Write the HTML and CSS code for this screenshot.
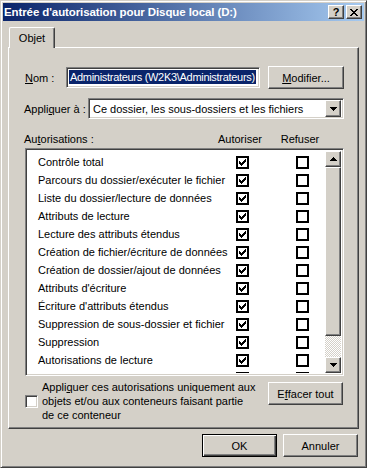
FILE: index.html
```html
<!DOCTYPE html>
<html lang="fr">
<head>
    <meta charset="UTF-8">
    <meta name="viewport" content="width=device-width, initial-scale=1.0">
    <title>Entrée d'autorisation pour Disque local (D:)</title>
    <link rel="stylesheet" href="styles.css">
</head>
<body>
    <div class="window">
        <div class="titlebar">
            <span class="title">Entrée d'autorisation pour Disque local (D:)</span>
            <div class="caption-buttons">
                <span class="raised caption-btn help">?</span>
                <span class="raised caption-btn">
                    <svg width="8" height="7" viewBox="0 0 8 7"><path d="M0 0h2v1H0zM6 0h2v1H6zM1 1h2v1H1zM5 1h2v1H5zM2 2h4v1H2zM3 3h2v1H3zM2 4h4v1H2zM1 5h2v1H1zM5 5h2v1H5zM0 6h2v1H0zM6 6h2v1H6z"/></svg>
                </span>
            </div>
        </div>

        <div class="client">
            <div class="tabs">
                <div class="tab">Objet</div>
            </div>

            <div class="panel">
                <div class="name-row">
                    <span class="name-label"><u>N</u>om :</span>
                    <div class="sunken name-field"><span class="selected">Administrateurs (W2K3\Administrateurs)</span></div>
                    <span class="raised btn modify-btn"><u>M</u>odifier...</span>
                </div>

                <div class="apply-row">
                    <span class="apply-label">Appli<u>q</u>uer à :</span>
                    <div class="sunken combo">
                        <span class="combo-text">Ce dossier, les sous-dossiers et les fichiers</span>
                        <span class="raised combo-arrow">
                            <svg width="7" height="4" viewBox="0 0 7 4"><path d="M0 0h7v1H0zM1 1h5v1H1zM2 2h3v1H2zM3 3h1v1H3z"/></svg>
                        </span>
                    </div>
                </div>

                <div class="perm-head">
                    <span>Au<u>t</u>orisations :</span>
                    <span class="col">Autoriser</span>
                    <span class="col">Refuser</span>
                </div>

                <div class="sunken perm-list">
                    <div class="perm-rows">
                        <div class="perm-row"><span>Contrôle total</span><span class="col"><span class="box"><svg width="7" height="7" viewBox="0 0 7 7"><path d="M0 2h1v3H0zM1 3h1v3H1zM2 4h1v3H2zM3 3h1v3H3zM4 2h1v3H4zM5 1h1v3H5zM6 0h1v3H6z"/></svg></span></span><span class="col"><span class="box"></span></span></div>
                        <div class="perm-row"><span>Parcours du dossier/exécuter le fichier</span><span class="col"><span class="box"><svg width="7" height="7" viewBox="0 0 7 7"><path d="M0 2h1v3H0zM1 3h1v3H1zM2 4h1v3H2zM3 3h1v3H3zM4 2h1v3H4zM5 1h1v3H5zM6 0h1v3H6z"/></svg></span></span><span class="col"><span class="box"></span></span></div>
                        <div class="perm-row"><span>Liste du dossier/lecture de données</span><span class="col"><span class="box"><svg width="7" height="7" viewBox="0 0 7 7"><path d="M0 2h1v3H0zM1 3h1v3H1zM2 4h1v3H2zM3 3h1v3H3zM4 2h1v3H4zM5 1h1v3H5zM6 0h1v3H6z"/></svg></span></span><span class="col"><span class="box"></span></span></div>
                        <div class="perm-row"><span>Attributs de lecture</span><span class="col"><span class="box"><svg width="7" height="7" viewBox="0 0 7 7"><path d="M0 2h1v3H0zM1 3h1v3H1zM2 4h1v3H2zM3 3h1v3H3zM4 2h1v3H4zM5 1h1v3H5zM6 0h1v3H6z"/></svg></span></span><span class="col"><span class="box"></span></span></div>
                        <div class="perm-row"><span>Lecture des attributs étendus</span><span class="col"><span class="box"><svg width="7" height="7" viewBox="0 0 7 7"><path d="M0 2h1v3H0zM1 3h1v3H1zM2 4h1v3H2zM3 3h1v3H3zM4 2h1v3H4zM5 1h1v3H5zM6 0h1v3H6z"/></svg></span></span><span class="col"><span class="box"></span></span></div>
                        <div class="perm-row"><span>Création de fichier/écriture de données</span><span class="col"><span class="box"><svg width="7" height="7" viewBox="0 0 7 7"><path d="M0 2h1v3H0zM1 3h1v3H1zM2 4h1v3H2zM3 3h1v3H3zM4 2h1v3H4zM5 1h1v3H5zM6 0h1v3H6z"/></svg></span></span><span class="col"><span class="box"></span></span></div>
                        <div class="perm-row"><span>Création de dossier/ajout de données</span><span class="col"><span class="box"><svg width="7" height="7" viewBox="0 0 7 7"><path d="M0 2h1v3H0zM1 3h1v3H1zM2 4h1v3H2zM3 3h1v3H3zM4 2h1v3H4zM5 1h1v3H5zM6 0h1v3H6z"/></svg></span></span><span class="col"><span class="box"></span></span></div>
                        <div class="perm-row"><span>Attributs d'écriture</span><span class="col"><span class="box"><svg width="7" height="7" viewBox="0 0 7 7"><path d="M0 2h1v3H0zM1 3h1v3H1zM2 4h1v3H2zM3 3h1v3H3zM4 2h1v3H4zM5 1h1v3H5zM6 0h1v3H6z"/></svg></span></span><span class="col"><span class="box"></span></span></div>
                        <div class="perm-row"><span>Écriture d'attributs étendus</span><span class="col"><span class="box"><svg width="7" height="7" viewBox="0 0 7 7"><path d="M0 2h1v3H0zM1 3h1v3H1zM2 4h1v3H2zM3 3h1v3H3zM4 2h1v3H4zM5 1h1v3H5zM6 0h1v3H6z"/></svg></span></span><span class="col"><span class="box"></span></span></div>
                        <div class="perm-row"><span>Suppression de sous-dossier et fichier</span><span class="col"><span class="box"><svg width="7" height="7" viewBox="0 0 7 7"><path d="M0 2h1v3H0zM1 3h1v3H1zM2 4h1v3H2zM3 3h1v3H3zM4 2h1v3H4zM5 1h1v3H5zM6 0h1v3H6z"/></svg></span></span><span class="col"><span class="box"></span></span></div>
                        <div class="perm-row"><span>Suppression</span><span class="col"><span class="box"><svg width="7" height="7" viewBox="0 0 7 7"><path d="M0 2h1v3H0zM1 3h1v3H1zM2 4h1v3H2zM3 3h1v3H3zM4 2h1v3H4zM5 1h1v3H5zM6 0h1v3H6z"/></svg></span></span><span class="col"><span class="box"></span></span></div>
                        <div class="perm-row"><span>Autorisations de lecture</span><span class="col"><span class="box"><svg width="7" height="7" viewBox="0 0 7 7"><path d="M0 2h1v3H0zM1 3h1v3H1zM2 4h1v3H2zM3 3h1v3H3zM4 2h1v3H4zM5 1h1v3H5zM6 0h1v3H6z"/></svg></span></span><span class="col"><span class="box"></span></span></div>
                        <div class="perm-row"><span>Modification des autorisations</span><span class="col"><span class="box"><svg width="7" height="7" viewBox="0 0 7 7"><path d="M0 2h1v3H0zM1 3h1v3H1zM2 4h1v3H2zM3 3h1v3H3zM4 2h1v3H4zM5 1h1v3H5zM6 0h1v3H6z"/></svg></span></span><span class="col"><span class="box"></span></span></div>
                    </div>
                    <div class="scrollbar">
                        <span class="raised scroll-btn">
                            <svg width="7" height="4" viewBox="0 0 7 4"><path d="M3 0h1v1H3zM2 1h3v1H2zM1 2h5v1H1zM0 3h7v1H0z"/></svg>
                        </span>
                        <span class="raised scroll-thumb"></span>
                        <span class="scroll-track"></span>
                        <span class="raised scroll-btn">
                            <svg width="7" height="4" viewBox="0 0 7 4"><path d="M0 0h7v1H0zM1 1h5v1H1zM2 2h3v1H2zM3 3h1v1H3z"/></svg>
                        </span>
                    </div>
                </div>

                <div class="bottom-row">
                    <div class="inherit-check">
                        <span class="sunken check"></span>
                        <span class="inherit-text">Appli<u>q</u>uer ces autorisations uniquement aux<br>objets et/ou aux conteneurs faisant partie<br>de ce conteneur</span>
                    </div>
                    <span class="raised btn clear-btn">E<u>f</u>facer tout</span>
                </div>
            </div>

            <div class="footer">
                <span class="btn default-btn">OK</span>
                <span class="raised btn">Annuler</span>
            </div>
        </div>
    </div>
</body>
</html>
```

FILE: styles.css
```css
body {
    margin: 0;
    background: #d4d0c8;
    font-family: "Liberation Sans", Arial, sans-serif;
    font-size: 11px;
    color: #000;
}
u {
    text-decoration-thickness: 1px;
    text-underline-offset: 1px;
}
.window {
    width: 367px;
    height: 468px;
    box-sizing: border-box;
    border: 1px solid;
    border-color: #d4d0c8 #404040 #404040 #d4d0c8;
    box-shadow: inset 1px 1px #fff, inset -1px -1px #808080;
    padding: 2px;
    display: flex;
    flex-direction: column;
}

/* classic 3d edges */
.raised {
    box-sizing: border-box;
    background: #d4d0c8;
    border: 1px solid;
    border-color: #fff #404040 #404040 #fff;
    box-shadow: inset -1px -1px #808080, inset 1px 1px #d4d0c8;
}
.sunken {
    box-sizing: border-box;
    background: #fff;
    border: 1px solid;
    border-color: #808080 #fff #fff #808080;
    box-shadow: inset 1px 1px #404040, inset -1px -1px #d4d0c8;
}

.titlebar {
    height: 18px;
    flex: none;
    display: flex;
    align-items: center;
    justify-content: space-between;
    padding: 0 2px 0 1px;
    background: linear-gradient(to right, #0a246a, #a6caf0);
    color: #fff;
}
.title {
    font-weight: bold;
    font-size: 11.5px;
    letter-spacing: -0.1px;
    white-space: nowrap;
}
.caption-buttons {
    display: flex;
    gap: 2px;
}
.caption-btn {
    width: 16px;
    height: 14px;
    display: flex;
    align-items: center;
    justify-content: center;
    color: #000;
}
.help {
    font-weight: bold;
    font-size: 11px;
    line-height: 1;
}

.client {
    flex: 1;
    padding: 6px 5px 0 5px;
    display: flex;
    flex-direction: column;
}
.tabs {
    display: flex;
    height: 20px;
    padding-left: 1px;
}
.tab {
    position: relative;
    z-index: 1;
    width: 46px;
    height: 21px;
    box-sizing: border-box;
    background: #d4d0c8;
    border-top: 1px solid #fff;
    border-left: 1px solid #fff;
    border-right: 1px solid #404040;
    border-radius: 2px 2px 0 0;
    box-shadow: inset -1px 0 #808080;
    text-align: center;
    padding-top: 4px;
}
.panel {
    height: 382px;
    box-sizing: border-box;
    border: 1px solid;
    border-color: #fff #404040 #404040 #fff;
    box-shadow: inset -1px -1px #808080;
    padding: 18px 0 0 16px;
}

.btn {
    display: flex;
    align-items: center;
    justify-content: center;
    height: 23px;
}
.name-row {
    display: flex;
    align-items: center;
    height: 23px;
}
.name-label {
    width: 41px;
}
.name-field {
    width: 194px;
    height: 21px;
    padding: 3px 0 0 2px;
    overflow: hidden;
}
.selected {
    background: #0a246a;
    color: #fff;
    padding: 1px 1px;
    letter-spacing: -0.3px;
    white-space: nowrap;
}
.modify-btn {
    width: 76px;
    margin-left: 8px;
}
.apply-row {
    display: flex;
    align-items: center;
    margin-top: 9px;
    margin-left: -1px;
}
.apply-label {
    width: 64px;
}
.combo {
    width: 256px;
    height: 21px;
    display: flex;
    align-items: center;
    padding: 2px;
}
.combo-text {
    flex: 1;
    padding-left: 2px;
}
.combo-arrow {
    width: 16px;
    height: 17px;
    display: flex;
    align-items: center;
    justify-content: center;
}

.perm-head {
    display: grid;
    grid-template-columns: 186px 60px 60px;
    align-items: end;
    margin-top: 10px;
    margin-left: -1px;
    height: 16px;
}
.col {
    display: flex;
    justify-content: center;
}
.perm-list {
    width: 319px;
    height: 228px;
    margin-top: 3px;
    padding: 2px;
    display: flex;
}
.perm-rows {
    flex: 1;
    overflow: hidden;
    padding-top: 2px;
}
.perm-row {
    display: grid;
    grid-template-columns: 184px 60px 60px;
    align-items: center;
    height: 18px;
    white-space: nowrap;
}
.perm-row > span:first-child {
    padding-left: 10px;
}
.box {
    width: 13px;
    height: 13px;
    box-sizing: border-box;
    border: 2px solid #000;
    background: #fff;
    display: flex;
    align-items: center;
    justify-content: center;
}
.scrollbar {
    width: 16px;
    display: flex;
    flex-direction: column;
}
.scroll-btn {
    height: 16px;
    display: flex;
    align-items: center;
    justify-content: center;
}
.scroll-thumb {
    height: 169px;
}
.scroll-track {
    flex: 1;
    background: repeating-conic-gradient(#fff 0 25%, #d4d0c8 0 50%) 0 0 / 2px 2px;
}

.bottom-row {
    display: flex;
    justify-content: space-between;
    width: 318px;
    margin-top: 4px;
}
.inherit-check {
    display: flex;
    align-items: center;
    gap: 4px;
}
.check {
    width: 13px;
    height: 13px;
}
.inherit-text {
    line-height: 14px;
}
.clear-btn {
    width: 75px;
    margin-top: 2px;
}

.footer {
    display: flex;
    justify-content: flex-end;
    gap: 6px;
    margin-top: 5px;
    padding-right: 1px;
}
.footer .btn {
    width: 75px;
}
.default-btn {
    box-sizing: border-box;
    border: 1px solid #000;
    box-shadow: inset 1px 1px #fff, inset -1px -1px #404040, inset -2px -2px #808080;
}
```
